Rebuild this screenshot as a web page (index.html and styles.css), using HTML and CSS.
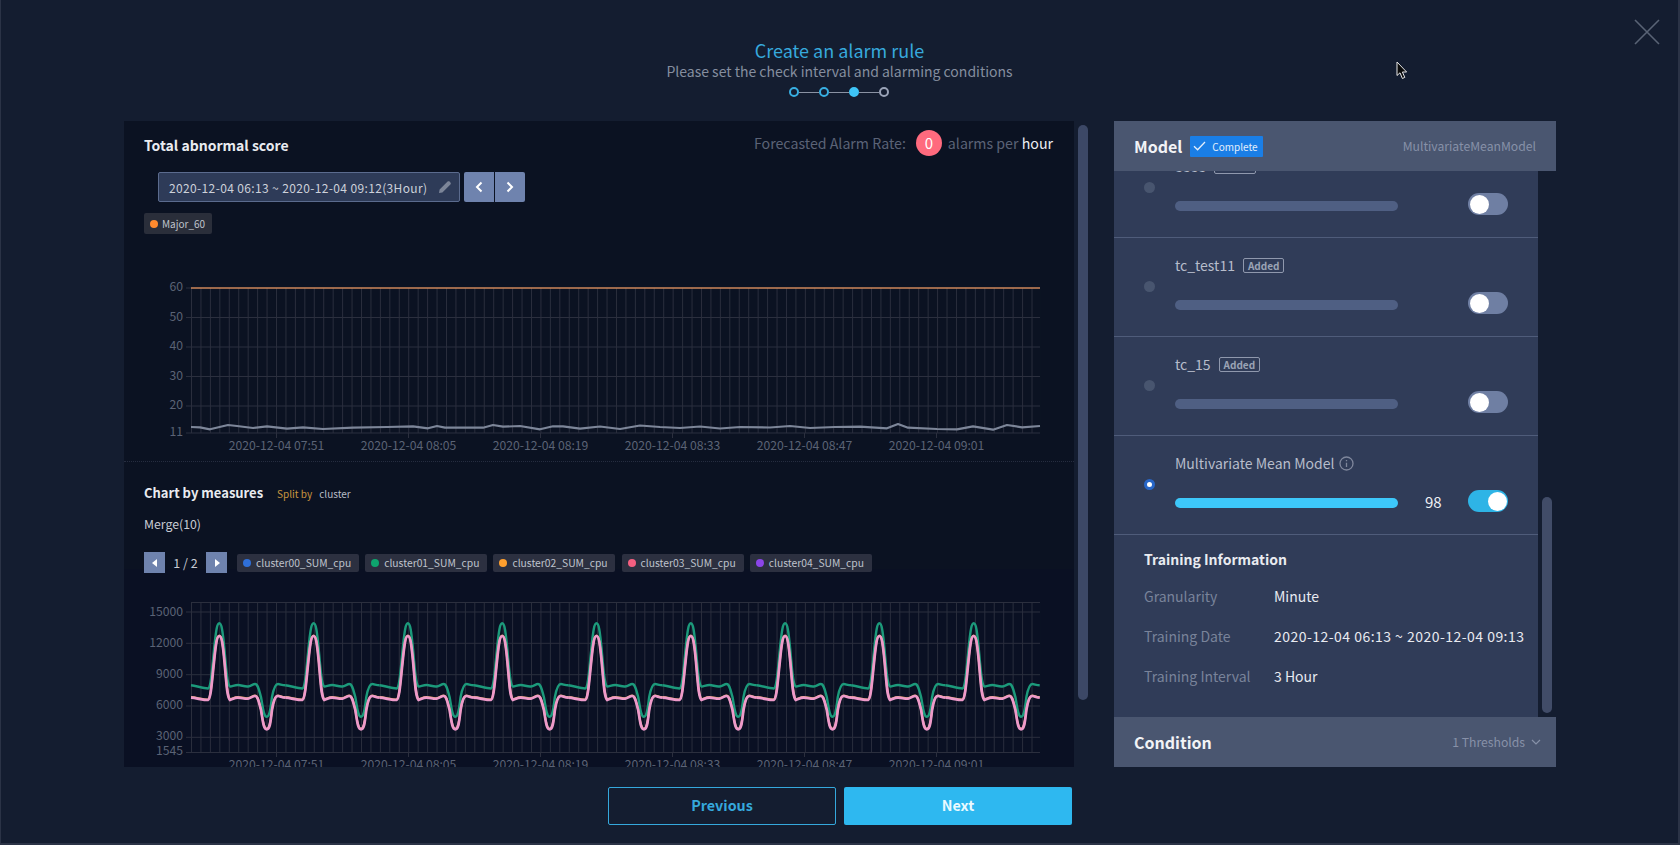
FILE: index.html
```html
<!DOCTYPE html>
<html lang="en">
<head>
<meta charset="utf-8">
<title>Create an alarm rule</title>
<link rel="stylesheet" href="styles.css">
</head>
<body>
<div class="modal">
  <svg class="close" width="26" height="26" viewBox="0 0 26 26"><path d="M1 1L25 25M25 1L1 25"/></svg>
  <svg class="cursor" width="12" height="19" viewBox="0 0 12 19"><path d="M1 1V14.5L4 11.8L6.4 17.5L8.8 16.4L6.4 11H10.6Z"/></svg>

  <header class="head">
    <h1 class="head-title">Create an alarm rule</h1>
    <p class="head-sub">Please set the check interval and alarming conditions</p>
    <div class="steps">
      <span class="step"></span><span class="step-line"></span>
      <span class="step"></span><span class="step-line"></span>
      <span class="step step-on"></span><span class="step-line"></span>
      <span class="step step-next"></span>
    </div>
  </header>

  <main class="content">
    <div class="left-col">
      <div class="chart-panel">
        <section class="sec-top">
          <div class="sec-head">
            <h2 class="sec-title">Total abnormal score</h2>
            <div class="rate">
              <span>Forecasted Alarm Rate:</span>
              <span class="rate-badge">0</span>
              <span>alarms per <b class="rate-unit">hour</b></span>
            </div>
          </div>
          <div class="date-row">
            <div class="date-input">
              <span>2020-12-04 06:13 ~ 2020-12-04 09:12(3Hour)</span>
              <svg class="pencil-icon" width="14" height="14" viewBox="0 0 14 14"><path class="pencil" d="M1 13L1.6 9.6L9.6 1.6C10.2 1 11 1 11.6 1.6L12.4 2.4C13 3 13 3.8 12.4 4.4L4.4 12.4Z"/></svg>
            </div>
            <div class="date-nav">
              <button class="nav-btn"><svg width="8" height="12" viewBox="0 0 8 12"><path d="M6.5 1.5L2 6L6.5 10.5"/></svg></button>
              <button class="nav-btn"><svg width="8" height="12" viewBox="0 0 8 12"><path d="M1.5 1.5L6 6L1.5 10.5"/></svg></button>
            </div>
          </div>
          <div class="legend-one"><span class="chip chip-major"><i class="dot d-orange"></i>Major_60</span></div>
          <svg class="chart chart-a" width="950" height="221" viewBox="124 240 950 221">
            <line class="vgrid" x1="191" y1="360.5" x2="1041" y2="360.5" stroke-width="145"/>
            <path class="hgrid" d="M186 317.5H1040M186 347H1040M186 376.5H1040M186 406H1040M186 433H1040"/>
            <path class="hgrid" d="M186 288H191M276.5 433V438M408.5 433V438M540.5 433V438M672.5 433V438M804.5 433V438M936.5 433V438"/>
            <line class="limit" x1="191" y1="288" x2="1040" y2="288"/>
            <polyline class="score" points="191,427 200,427.3 210,429.3 228,425 237,426 253,428 267,426.3 287,428.7 303,427.3 323,429 353,427.7 387,427 413,426.3 428,428.3 437,426 445,427.7 483,427.7 493,425 503,426.7 520,426 540,429.3 553,426.3 563,426.3 580,428.7 600,426.5 620,429 640,425.5 660,427 680,428 700,426.5 720,428.5 740,427 770,427.5 790,426 810,428 835,427 860,426.7 887,428.3 898,424 908,427.7 937,429 957,429.3 973,426.3 993,429.7 1007,425 1022,427.3 1040,426"/>
            <g class="axis axis-y">
              <text x="183" y="291">60</text><text x="183" y="320.5">50</text><text x="183" y="350">40</text><text x="183" y="379.5">30</text><text x="183" y="409">20</text><text x="183" y="436">11</text>
            </g>
            <g class="axis axis-x">
              <text x="276.5" y="450">2020-12-04 07:51</text><text x="408.5" y="450">2020-12-04 08:05</text><text x="540.5" y="450">2020-12-04 08:19</text><text x="672.5" y="450">2020-12-04 08:33</text><text x="804.5" y="450">2020-12-04 08:47</text><text x="936.5" y="450">2020-12-04 09:01</text>
            </g>
          </svg>
        </section>

        <section class="sec-bottom">
          <div class="measure-head">
            <h2 class="sec-title sec-title-sm">Chart by measures</h2>
            <span class="split-key">Split by</span>
            <span class="split-val">cluster</span>
          </div>
          <div class="merge">Merge(10)</div>
          <div class="pager-row">
            <button class="page-btn"><svg width="6" height="8" viewBox="0 0 6 8"><path d="M5 0V8L0 4Z"/></svg></button>
            <span class="page-num">1 / 2</span>
            <button class="page-btn"><svg width="6" height="8" viewBox="0 0 6 8"><path d="M1 0V8L6 4Z"/></svg></button>
            <div class="chips">
              <span class="chip chip-series"><i class="dot d-blue"></i>cluster00_SUM_cpu</span>
              <span class="chip chip-series"><i class="dot d-green"></i>cluster01_SUM_cpu</span>
              <span class="chip chip-series"><i class="dot d-amber"></i>cluster02_SUM_cpu</span>
              <span class="chip chip-series"><i class="dot d-pink"></i>cluster03_SUM_cpu</span>
              <span class="chip chip-series"><i class="dot d-purple"></i>cluster04_SUM_cpu</span>
            </div>
          </div>
          <svg class="chart chart-b" width="950" height="187" viewBox="124 580 950 187">
            <defs>
              <path id="p-hi" d="M0 685.3C5 686 12 688 17 688.5C20 688 21 670 23 650C25 630 26 623.3 28.3 623.3C30.6 623.3 31.6 630 33.5 650C35.5 672 36 685 39 686.5C42 686 44 685 47 685C50 685 54 687 57 686.5C60 686 62 684 64 684C67 684 68 690 70 697C72 708 72.5 716.7 75.7 716.7C79 716.7 79.5 708 81 697C82.5 689 84 684 87 684C89 684 91 685.3 94.3 685.3"/>
              <path id="p-lo" d="M0 697.7C5 698 12 700 17 700C20 699 21 680 23 662C25 642 26 636 28.3 636C30.6 636 31.6 642 33.5 662C35.5 684 36 697 39 700C42 699 44 697.7 47 697.7C50 697.7 54 699 57 698.7C60 698 62 696 64 696C67 696 68 703 70 710C72 722 72.5 729.3 75.7 729.3C79 729.3 79.5 722 81 710C82.5 701 84 696 87 696C89 696 91 697.7 94.3 697.7"/>
              <g id="run-hi"><use href="#p-hi" x="0"/><use href="#p-hi" x="94.3"/><use href="#p-hi" x="188.6"/><use href="#p-hi" x="282.9"/><use href="#p-hi" x="377.2"/><use href="#p-hi" x="471.5"/><use href="#p-hi" x="565.8"/><use href="#p-hi" x="660.1"/><use href="#p-hi" x="754.4"/></g>
              <g id="run-lo"><use href="#p-lo" x="0"/><use href="#p-lo" x="94.3"/><use href="#p-lo" x="188.6"/><use href="#p-lo" x="282.9"/><use href="#p-lo" x="377.2"/><use href="#p-lo" x="471.5"/><use href="#p-lo" x="565.8"/><use href="#p-lo" x="660.1"/><use href="#p-lo" x="754.4"/></g>
            </defs>
            <line class="vgrid" x1="191" y1="677.5" x2="1041" y2="677.5" stroke-width="150"/>
            <path class="hgrid" d="M191 602.5H1040M186 612H1040M186 643.3H1040M186 674.7H1040M186 706H1040M186 737.3H1040M186 752.5H1040"/>
            <path class="hgrid" d="M276.5 752V757M408.5 752V757M540.5 752V757M672.5 752V757M804.5 752V757M936.5 752V757"/>
            <g transform="translate(191 0)">
              <use class="line-green" href="#run-hi"/>
              <use class="line-amber" href="#run-lo" y="-0.6"/>
              <use class="line-pink" href="#run-lo"/>
            </g>
            <g class="axis axis-y">
              <text x="183" y="615.5">15000</text><text x="183" y="646.5">12000</text><text x="183" y="677.5">9000</text><text x="183" y="708.5">6000</text><text x="183" y="739.5">3000</text><text x="183" y="754.5">1545</text>
            </g>
            <g class="axis axis-x">
              <text x="276.5" y="769">2020-12-04 07:51</text><text x="408.5" y="769">2020-12-04 08:05</text><text x="540.5" y="769">2020-12-04 08:19</text><text x="672.5" y="769">2020-12-04 08:33</text><text x="804.5" y="769">2020-12-04 08:47</text><text x="936.5" y="769">2020-12-04 09:01</text>
            </g>
          </svg>
        </section>
      </div>
      <div class="left-track"><div class="left-thumb"></div></div>
    </div>

    <aside class="model-col">
      <div class="bar-head">
        <span class="bar-title">Model</span>
        <span class="complete"><svg width="13" height="10" viewBox="0 0 13 10"><path d="M1 5.2L4.6 8.8L12 1"/></svg>Complete</span>
        <span class="bar-right">MultivariateMeanModel</span>
      </div>
      <div class="model-mid">
        <div class="model-list">
          <div class="model-rows">
            <div class="row">
              <i class="radio"></i>
              <div class="row-main">
                <div class="row-name"><span>8888</span><em class="added">Added</em></div>
                <div class="row-ctrl"><div class="bar"></div><label class="toggle"><i class="knob"></i></label></div>
              </div>
            </div>
            <div class="row">
              <i class="radio"></i>
              <div class="row-main">
                <div class="row-name"><span>tc_test11</span><em class="added">Added</em></div>
                <div class="row-ctrl"><div class="bar"></div><label class="toggle"><i class="knob"></i></label></div>
              </div>
            </div>
            <div class="row">
              <i class="radio"></i>
              <div class="row-main">
                <div class="row-name"><span>tc_15</span><em class="added">Added</em></div>
                <div class="row-ctrl"><div class="bar"></div><label class="toggle"><i class="knob"></i></label></div>
              </div>
            </div>
            <div class="row">
              <i class="radio radio-on"></i>
              <div class="row-main">
                <div class="row-name"><span>Multivariate Mean Model</span>
                  <svg class="info" width="15" height="15" viewBox="0 0 15 15"><circle cx="7.5" cy="7.5" r="6.5"/><path d="M7.5 6.7V11M7.5 4V5.3"/></svg>
                </div>
                <div class="row-ctrl"><div class="bar bar-on"></div><span class="score-val">98</span><label class="toggle toggle-on"><i class="knob"></i></label></div>
              </div>
            </div>
          </div>
          <div class="training">
            <h3 class="training-title">Training Information</h3>
            <dl class="facts">
              <dt>Granularity</dt><dd>Minute</dd>
              <dt>Training Date</dt><dd class="fact-date">2020-12-04 06:13 ~ 2020-12-04 09:13</dd>
              <dt>Training Interval</dt><dd>3 Hour</dd>
            </dl>
          </div>
        </div>
        <div class="right-track"><div class="right-thumb"></div></div>
      </div>
      <div class="bar-foot">
        <span class="bar-title">Condition</span>
        <span class="bar-right foot-right">1 Thresholds<svg width="10" height="6" viewBox="0 0 10 6"><path d="M1 1L5 5L9 1"/></svg></span>
      </div>
    </aside>
  </main>

  <footer class="actions">
    <button class="btn btn-ghost">Previous</button>
    <button class="btn btn-solid">Next</button>
  </footer>
</div>
</body>
</html>
```

FILE: styles.css
```css
* { box-sizing: border-box; }
html, body { margin: 0; padding: 0; }
body {
  background: #141d30;
  font-family: "Noto Sans CJK KR", "Noto Sans", sans-serif;
  color: #c8ccd6;
}
button { font-family: inherit; border: 0; padding: 0; }
h1, h2, h3, p, dl, dd { margin: 0; }

.modal {
  position: relative;
  width: 1680px;
  height: 845px;
  overflow: hidden;
  background: #141d30;
  border-right: 2px solid #2b3346;
  border-bottom: 2px solid #2b3346;
  border-left: 1px solid #2b3346;
}
.close { position: absolute; top: 19px; right: 18px; }
.close path { fill: none; stroke: #596375; stroke-width: 1.6; }
.cursor { position: absolute; top: 61px; left: 1395px; }
.cursor path { fill: #0a0a0a; stroke: #e8e8e8; stroke-width: 1; }

.head {
  height: 121px;
  padding-top: 37px;
  display: flex;
  flex-direction: column;
  align-items: center;
}
.head-title { font-size: 18px; font-weight: 400; line-height: 26px; color: #37a9dd; }
.head-sub { font-size: 14px; line-height: 20px; margin-top: -2px; color: #858e9f; }
.steps { display: flex; align-items: center; margin: 6px 2px 0 0; }
.step { width: 10px; height: 10px; border-radius: 50%; border: 2px solid #38afe2; background: #141d30; }
.step-on { background: #3ec4f6; border-color: #3ec4f6; }
.step-next { border-color: #9aa3b7; }
.step-line { width: 20px; height: 1px; background: #8a92a3; }

.content { display: flex; padding-left: 123px; height: 646px; }
.left-col { display: flex; width: 990px; }
.chart-panel { width: 950px; height: 646px; overflow: hidden; background: #0b1222; }
.left-track { width: 14px; padding: 4px 0 0 4px; }
.left-thumb { width: 10px; height: 575px; border-radius: 5px; background: #3c4866; }

.sec-top { border-bottom: 1px dotted #262d40; height: 341px; }
.sec-bottom { background: linear-gradient(#0b1222 107px, #0a1023 107px); height: 305px; }
.sec-head {
  display: flex;
  justify-content: space-between;
  align-items: center;
  height: 44px;
  padding: 0 21px 0 20px;
}
.sec-title { font-size: 14px; font-weight: 700; color: #e9ebf0; line-height: 22px; }
.sec-title-sm { font-size: 13px; }
.sec-head .sec-title { margin-top: 3px; }
.rate { display: flex; align-items: center; font-size: 14.2px; color: #5b6377; }
.rate-badge {
  width: 26px; height: 26px; margin: 0 6px 0 10px; border-radius: 50%;
  background: #ff6a7e; color: #fff; text-align: center; line-height: 26px; font-size: 15px;
}
.rate-unit { font-weight: 400; color: #eceef2; }

.date-row { display: flex; gap: 4px; margin: 7px 0 0 34px; height: 30px; }
.date-input {
  width: 302px; display: flex; align-items: center; justify-content: space-between;
  padding: 0 7px 0 10px;
  background: #2e3b58; border: 1px solid #5b6b8e; border-radius: 2px;
  font-size: 12px; letter-spacing: 0.36px; color: #cdd1da; white-space: nowrap;
}
.pencil-icon { flex: none; }
.pencil { fill: #7c8598; }
.date-nav { display: flex; gap: 1px; }
.nav-btn { width: 30px; height: 30px; background: #6f83ae; display: flex; align-items: center; justify-content: center; }
.nav-btn:first-child { border-radius: 2px 0 0 2px; }
.nav-btn:last-child { border-radius: 0 2px 2px 0; }
.nav-btn path { fill: none; stroke: #fff; stroke-width: 2; }

.legend-one { margin: 11px 0 0 20px; height: 21px; display: flex; }
.chip { display: inline-flex; align-items: center; border-radius: 2px; white-space: nowrap; color: #bfc3cc; }
.chip-major { height: 21px; width: 68px; padding-left: 6px; background: #2a2e3a; font-size: 10px; gap: 4px; }
.dot { width: 8px; height: 8px; border-radius: 50%; flex: none; }
.d-orange { background: #ff8a2e; }
.d-blue { background: #2f6fd8; }
.d-green { background: #0ea56e; }
.d-amber { background: #ff9f2e; }
.d-pink { background: #f55f80; }
.d-purple { background: #8b45e8; }

.chart { display: block; }
.chart-a { margin-top: 6px; }
.vgrid { stroke: #2a2e3d; stroke-dasharray: 1 8.444; fill: none; }
.hgrid { stroke: #2b2f3e; stroke-width: 1; fill: none; }
.limit { stroke: #cf875b; stroke-width: 1.6; }
.score { fill: none; stroke: #7d8699; stroke-width: 2.2; stroke-linejoin: round; }
.axis text { font-size: 12.2px; fill: #5b6375; }
.axis-y text { text-anchor: end; }
.axis-x text { text-anchor: middle; }
.line-green { fill: none; stroke: #1c9a7b; stroke-width: 2.4; }
.line-amber { fill: none; stroke: #e0a860; stroke-width: 2; }
.line-pink { fill: none; stroke: #ee9aca; stroke-width: 2.7; }

.measure-head { display: flex; align-items: center; padding: 20px 0 0 20px; height: 42px; }
.split-key { margin-left: 14px; font-size: 10px; color: #c9953f; }
.split-val { margin-left: 7px; font-size: 10px; color: #b9bdc7; }
.merge { margin: 9px 0 0 20px; font-size: 12.3px; line-height: 22px; color: #c7cbd3; }
.pager-row { display: flex; align-items: center; margin: 17px 0 0 20px; height: 21px; }
.page-btn { width: 21px; height: 21px; background: #6f83ae; display: flex; align-items: center; justify-content: center; }
.page-btn path { fill: #fff; }
.page-num { width: 41px; text-align: center; font-size: 12.5px; color: #c7cbd3; }
.chips { display: flex; gap: 6.2px; margin-left: 10px; }
.chip-series { width: 122px; height: 18px; padding-left: 6px; gap: 5px; background: #2c3040; font-size: 10.3px; }
.chart-b { margin-top: 7px; }

.model-col { width: 442px; height: 646px; display: flex; flex-direction: column; }
.bar-head, .bar-foot {
  display: flex; align-items: center; padding: 0 20px 0 20px; background: #4a5670;
}
.bar-head { height: 50px; }
.bar-foot { height: 50px; padding-right: 15px; }
.bar-title { font-size: 16px; font-weight: 700; color: #f2f3f6; line-height: 24px; }
.complete {
  display: inline-flex; align-items: center; gap: 6px; height: 21px; width: 73px; margin-left: 8px; padding-left: 3px;
  background: #1a7ee6; font-size: 10px; color: #e4eefb; border-radius: 1px; white-space: nowrap;
}
.complete svg { flex: none; }
.complete path { fill: none; stroke: #e4eefb; stroke-width: 1.3; }
.bar-right { margin-left: auto; font-size: 12.2px; color: #8791a8; }
.foot-right { display: flex; align-items: center; gap: 6px; }
.foot-right path { fill: none; stroke: #8791a8; stroke-width: 1.2; }

.model-mid { display: flex; height: 546px; }
.model-list { width: 424px; height: 546px; overflow: hidden; background: #303c58; }
.model-rows { margin-top: -32px; }
.right-track { width: 18px; padding: 326px 0 0 4px; }
.right-thumb { width: 10px; height: 216px; border-radius: 5px; background: #414c68; }

.row {
  display: flex; align-items: center; height: 99px; padding-left: 30px;
  border-bottom: 1px solid #4f5c7a;
}
.radio { width: 11px; height: 11px; border-radius: 50%; background: #48556f; flex: none; margin: 0 20px 2px 0; }
.radio-on { background: #fff; border: 3.5px solid #2766c8; }
.row-main { width: 333px; align-self: flex-start; padding-top: 16px; }
.row-name { display: flex; align-items: center; height: 22px; font-size: 14px; color: #b7bdcb; gap: 8px; }
.added {
  height: 15px; line-height: 13px; padding: 0 4px; border: 1px solid #8f98ad; border-radius: 2px;
  font-size: 10px; font-weight: 700; font-style: normal; color: #9aa3b5;
}
.info circle, .info path { fill: none; stroke: #7f879c; stroke-width: 1.3; }
.info { margin-left: -3px; }
.row-ctrl { position: relative; display: flex; margin-top: 16px; height: 22px; }
.bar { width: 223px; height: 10px; margin-top: 8px; border-radius: 5px; background: #4f5f83; }
.bar-on { background: #3dc8fa; }
.score-val { position: absolute; left: 250px; top: 0; font-size: 15px; line-height: 24px; color: #eef0f4; }
.toggle {
  display: flex; margin-left: auto; width: 40px; height: 22px; padding: 1.5px;
  border-radius: 11px; background: #6f7fa3;
}
.knob { width: 19px; height: 19px; border-radius: 50%; background: #fff; }
.toggle-on { background: #2eb4e6; justify-content: flex-end; }

.training { padding: 13px 0 0 30px; }
.training-title { font-size: 14px; font-weight: 700; line-height: 22px; color: #e9ebf0; }
.facts { display: grid; grid-template-columns: 130px 1fr; grid-auto-rows: 40px; margin-top: 6px; align-items: center; font-size: 14px; }
.facts dt { color: #79839a; }
.facts dd { color: #e8eaf0; white-space: nowrap; }
.facts .fact-date { letter-spacing: 0.47px; }

.actions { display: flex; gap: 8px; padding: 20px 0 0 607px; }
.btn { width: 228px; height: 38px; padding-bottom: 4px; border-radius: 2px; font-size: 14.3px; font-weight: 700; }
.btn-ghost { background: transparent; border: 1px solid #35a8dc; color: #35a8dc; }
.btn-solid { background: #2eb8f0; color: #eafaff; }
```
